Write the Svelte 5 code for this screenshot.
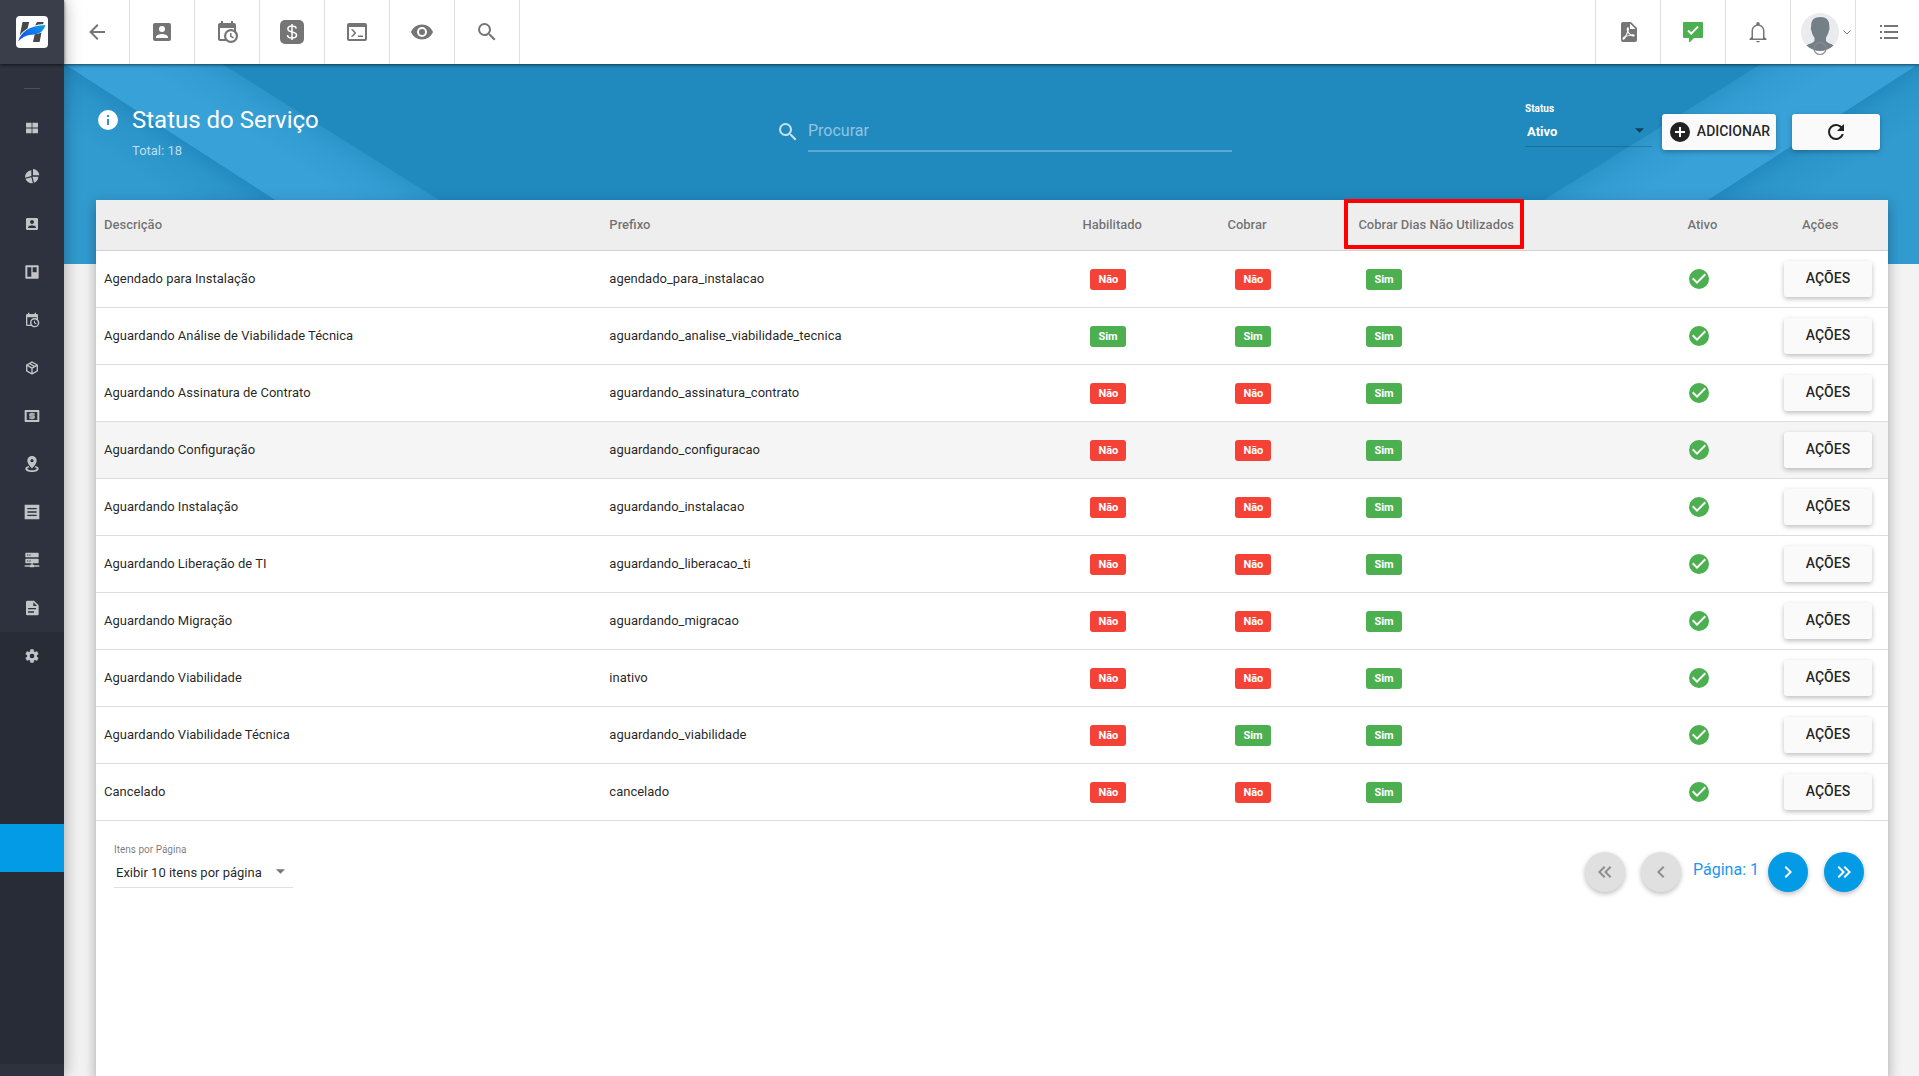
<script>
    let search = "";
    let status = "ativo";
    let perPage = "10";
    let page = 1;

    const icons = {
        back: "M20,11V13H8L13.5,18.5L12.08,19.92L4.16,12L12.08,4.08L13.5,5.5L8,11H20Z",
        account: "M6,17C6,15 10,13.9 12,13.9C14,13.9 18,15 18,17V18H6M15,9A3,3 0 0,1 12,12A3,3 0 0,1 9,9A3,3 0 0,1 12,6A3,3 0 0,1 15,9M3,5V19A2,2 0 0,0 5,21H19A2,2 0 0,0 21,19V5A2,2 0 0,0 19,3H5C3.89,3 3,3.9 3,5Z",
        calendar: "M15,13H16.5V15.82L18.94,17.23L18.19,18.53L15,16.69V13M19,8H5V19H9.67C9.24,18.09 9,17.07 9,16A7,7 0 0,1 16,9C17.07,9 18.09,9.24 19,9.67V8M5,21C3.89,21 3,20.1 3,19V5C3,3.89 3.89,3 5,3H6V1H8V3H16V1H18V3H19A2,2 0 0,1 21,5V11.1C22.24,12.36 23,14.09 23,16A7,7 0 0,1 16,23C14.09,23 12.36,22.24 11.1,21H5M16,11.15A4.85,4.85 0 0,0 11.15,16C11.15,18.68 13.32,20.85 16,20.85A4.85,4.85 0 0,0 20.85,16C20.85,13.32 18.68,11.15 16,11.15Z",
        console: "M20,19V7H4V19H20M20,3A2,2 0 0,1 22,5V19A2,2 0 0,1 20,21H4A2,2 0 0,1 2,19V5C2,3.89 2.9,3 4,3H20M13,17V15.5H18V17H13M9.3,13L5.8,9.3H7.9L10.9,12.4C11.2,12.8 11.2,13.2 10.9,13.6L7.9,16.7H5.8L9.3,13Z",
        eye: "M12,9A3,3 0 0,0 9,12A3,3 0 0,0 12,15A3,3 0 0,0 15,12A3,3 0 0,0 12,9M12,17A5,5 0 0,1 7,12A5,5 0 0,1 12,7A5,5 0 0,1 17,12A5,5 0 0,1 12,17M12,4.5C7,4.5 2.73,7.61 1,12C2.73,16.39 7,19.5 12,19.5C17,19.5 21.27,16.39 23,12C21.27,7.61 17,4.5 12,4.5Z",
        magnify: "M9.5,3A6.5,6.5 0 0,1 16,9.5C16,11.11 15.41,12.59 14.44,13.73L14.71,14H15.5L20.5,19L19,20.5L14,15.5V14.71L13.73,14.44C12.59,15.41 11.11,16 9.5,16A6.5,6.5 0 0,1 3,9.5A6.5,6.5 0 0,1 9.5,3M9.5,5C7,5 5,7 5,9.5C5,12 7,14 9.5,14C12,14 14,12 14,9.5C14,7 12,5 9.5,5Z",
        pdf: "M14,9H19.5L14,3.5V9M7,2H15L21,8V20A2,2 0 0,1 19,22H7C5.89,22 5,21.1 5,20V4A2,2 0 0,1 7,2M11.93,12.44C12.34,13.34 12.86,14.08 13.46,14.59L13.87,14.91C13,15.07 11.8,15.35 10.53,15.84L10.42,15.88L10.92,14.84C11.37,13.97 11.7,13.18 11.93,12.44M18.41,16.25C18.59,16.07 18.68,15.84 18.69,15.59C18.72,15.39 18.67,15.2 18.57,15.04C18.28,14.57 17.53,14.35 16.29,14.35L15,14.42L14.13,13.84C13.5,13.32 12.93,12.41 12.53,11.28L12.57,11.14C12.9,9.81 13.21,8.2 12.55,7.54C12.39,7.38 12.17,7.3 11.94,7.3H11.7C11.33,7.3 11,7.69 10.91,8.07C10.54,9.4 10.76,10.13 11.13,11.34V11.35C10.88,12.23 10.56,13.25 10.05,14.28L9.09,16.08L8.2,16.57C7,17.32 6.43,18.16 6.32,18.69C6.28,18.88 6.3,19.05 6.37,19.23L6.4,19.28L6.88,19.59L7.32,19.7C8.13,19.7 9.05,18.75 10.29,16.63L10.47,16.56C11.5,16.23 12.78,16 14.5,15.81C15.53,16.32 16.74,16.55 17.5,16.55C17.94,16.55 18.24,16.44 18.41,16.25Z",
        bell: "M10,21H14A2,2 0 0,1 12,22.4A2,2 0 0,1 10,21M20.5,19V20H3.5V19L5.5,17V11C5.5,7.9 7.4,5.2 10.3,4.4V3.6A1.7,1.7 0 0,1 12,2A1.7,1.7 0 0,1 13.7,3.6V4.4C16.6,5.2 18.5,7.9 18.5,11V17L20.5,19M17,11A5,5 0 0,0 12,5.7A5,5 0 0,0 7,11V18.5H17V11Z",
        list: "M4,5H6V7H4V5M8,5H22V7H8V5M4,11H6V13H4V11M8,11H22V13H8V11M4,17H6V19H4V17M8,17H22V19H8V17Z",
        info: "M13,9H11V7H13M13,17H11V11H13M12,2A10,10 0 0,0 2,12A10,10 0 0,0 12,22A10,10 0 0,0 22,12A10,10 0 0,0 12,2Z",
        plus: "M17,13H13V17H11V13H7V11H11V7H13V11H17M12,2A10,10 0 0,0 2,12A10,10 0 0,0 12,22A10,10 0 0,0 22,12A10,10 0 0,0 12,2Z",
        refresh: "M17.65,6.35C16.2,4.9 14.21,4 12,4A8,8 0 0,0 4,12A8,8 0 0,0 12,20C15.73,20 18.84,17.45 19.73,14H17.65C16.83,16.33 14.61,18 12,18A6,6 0 0,1 6,12A6,6 0 0,1 12,6C13.66,6 15.14,6.69 16.22,7.78L13,11H20V4L17.65,6.35Z",
        check: "M12,2A10,10 0 0,1 22,12A10,10 0 0,1 12,22A10,10 0 0,1 2,12A10,10 0 0,1 12,2M10,17L19,8L17.59,6.59L10,14.17L6.41,10.59L5,12L10,17Z",
        first: "M18.41,7.41L17,6L11,12L17,18L18.41,16.59L13.83,12L18.41,7.41M12.41,7.41L11,6L5,12L11,18L12.41,16.59L7.83,12L12.41,7.41Z",
        prev: "M15.41,16.58L10.83,12L15.41,7.41L14,6L8,12L14,18L15.41,16.58Z",
        next: "M8.59,16.58L13.17,12L8.59,7.41L10,6L16,12L10,18L8.59,16.58Z",
        last: "M5.59,7.41L7,6L13,12L7,18L5.59,16.59L10.17,12L5.59,7.41M11.59,7.41L13,6L19,12L13,18L11.59,16.59L16.17,12L11.59,7.41Z",
        grid: "M3,4H11.4V11.4H3V4M12.6,4H21V11.4H12.6V4M3,12.6H11.4V20H3V12.6M12.6,12.6H21V20H12.6V12.6Z",
        pie: "M13.5,1.5A10,10 0 0,1 23,11H13.5V1.5M11,3.5V12L1.5,14.5A10,10 0 0,1 11,3.5M2.3,16.2L11,13.8L13.3,22.8A10.5,10.5 0 0,1 2.3,16.2M12.7,13H21.5A10,10 0 0,1 15.1,22L12.7,13Z",
        board: "M3,2H21A1,1 0 0,1 22,3V21A1,1 0 0,1 21,22H3A1,1 0 0,1 2,21V3A1,1 0 0,1 3,2M5,5V19H11V5H5M13,5V12.5H19V5H13Z",
        box: "M21,16.5C21,16.88 20.79,17.21 20.47,17.38L12.57,21.82C12.41,21.94 12.21,22 12,22C11.79,22 11.59,21.94 11.43,21.82L3.53,17.38C3.21,17.21 3,16.88 3,16.5V7.5C3,7.12 3.21,6.79 3.53,6.62L11.43,2.18C11.59,2.06 11.79,2 12,2C12.21,2 12.41,2.06 12.57,2.18L20.47,6.62C20.79,6.79 21,7.12 21,7.5V16.5M12,4.15L10.11,5.22L16,8.61L17.96,7.5L12,4.15M6.04,7.5L12,10.85L13.96,9.75L8.08,6.35L6.04,7.5M5,15.91L11,19.29V12.58L5,9.21V15.91M19,15.91V9.21L13,12.58V19.29L19,15.91Z",
        cash: "M2,3H22A1,1 0 0,1 23,4V20A1,1 0 0,1 22,21H2A1,1 0 0,1 1,20V4A1,1 0 0,1 2,3M4,6V18H20V6H4M11,7H13V8H16V10H10V11H15A1,1 0 0,1 16,12V15A1,1 0 0,1 15,16H13V17H11V16H8V14H14V13H9A1,1 0 0,1 8,12V9A1,1 0 0,1 9,8H11V7Z",
        pin: "M12,0A7,7 0 0,1 19,7C19,12 12,18.5 12,18.5C12,18.5 5,12 5,7A7,7 0 0,1 12,0M12,4.6A2.4,2.4 0 0,0 9.6,7A2.4,2.4 0 0,0 12,9.4A2.4,2.4 0 0,0 14.4,7A2.4,2.4 0 0,0 12,4.6M22,19C22,22 17.5,24 12,24C6.500,24 2,22 2,19C2,17.2 4,15.7 7,15L8.2,17C6.4,17.4 5,18.2 5,19C5,20.2 8,21.3 12,21.3C16,21.3 19,20.2 19,19C19,18.2 17.6,17.4 15.8,17L17,15C20,15.7 22,17.2 22,19Z",
        note: "M1,1H23V23H1V1M5,6V8H19V6H5M5,11V13H19V11H5M5,16V18H19V16H5Z",
        server: "M3,1H21A1,1 0 0,1 22,2V7A1,1 0 0,1 21,8H3A1,1 0 0,1 2,7V2A1,1 0 0,1 3,1M3,10H21A1,1 0 0,1 22,11V16A1,1 0 0,1 21,17H13V19H15V20H23V22H15V23H9V22H1V20H9V19H11V17H3A1,1 0 0,1 2,16V11A1,1 0 0,1 3,10M4.5,3.7V5.3H6.5V3.7H4.5M8,3.7V5.3H10V3.7H8M4.5,12.7V14.3H6.5V12.7H4.5M8,12.7V14.3H10V12.7H8Z",
        file: "M14,9H19.5L14,3.5V9M5,1H15L22,8V21A2,2 0 0,1 20,23H5A2,2 0 0,1 3,21V3A2,2 0 0,1 5,1M6,12V14H18V12H6M6,17V19H15V17H6Z",
        cog: "M12,15.5A3.5,3.5 0 0,1 8.5,12A3.5,3.5 0 0,1 12,8.5A3.5,3.5 0 0,1 15.5,12A3.5,3.5 0 0,1 12,15.5M19.43,12.97C19.47,12.65 19.5,12.33 19.5,12C19.5,11.67 19.47,11.34 19.43,11L21.54,9.37C21.73,9.22 21.78,8.95 21.66,8.73L19.66,5.27C19.54,5.05 19.27,4.96 19.05,5.05L16.56,6.05C16.04,5.66 15.5,5.32 14.87,5.07L14.5,2.42C14.46,2.18 14.25,2 14,2H10C9.75,2 9.54,2.18 9.5,2.42L9.13,5.07C8.5,5.32 7.96,5.66 7.44,6.05L4.95,5.05C4.73,4.96 4.46,5.05 4.34,5.27L2.34,8.73C2.21,8.95 2.27,9.22 2.46,9.37L4.57,11C4.53,11.34 4.5,11.67 4.5,12C4.5,12.33 4.53,12.65 4.57,12.97L2.46,14.63C2.27,14.78 2.21,15.05 2.34,15.27L4.34,18.73C4.46,18.95 4.73,19.03 4.95,18.95L7.44,17.94C7.96,18.34 8.5,18.68 9.13,18.93L9.5,21.58C9.54,21.82 9.75,22 10,22H14C14.25,22 14.46,21.82 14.5,21.58L14.87,18.93C15.5,18.67 16.04,18.34 16.56,17.94L19.05,18.95C19.27,19.03 19.54,18.95 19.66,18.73L21.66,15.27C21.78,15.05 21.73,14.78 21.54,14.63L19.43,12.97Z",
    };

    const menu = [
        { icon: "grid", label: "Painel" },
        { icon: "pie", label: "Relatórios" },
        { icon: "account", label: "Clientes" },
        { icon: "board", label: "Quadros" },
        { icon: "calendar", label: "Agenda" },
        { icon: "box", label: "Estoque" },
        { icon: "cash", label: "Financeiro" },
        { icon: "pin", label: "Mapa" },
        { icon: "note", label: "Notas" },
        { icon: "server", label: "Rede" },
        { icon: "file", label: "Documentos" },
    ];

    // submenu of the settings group, collapsed to empty slots
    const submenu = ["Geral", "Usuários", "Empresas", "Serviços", "Planos", "Modelos", "Integrações", "Sistema"];

    const rows = [
        { desc: "Agendado para Instalação", prefix: "agendado_para_instalacao", enabled: false, charge: false },
        { desc: "Aguardando Análise de Viabilidade Técnica", prefix: "aguardando_analise_viabilidade_tecnica", enabled: true, charge: true },
        { desc: "Aguardando Assinatura de Contrato", prefix: "aguardando_assinatura_contrato", enabled: false, charge: false },
        { desc: "Aguardando Configuração", prefix: "aguardando_configuracao", enabled: false, charge: false, hover: true },
        { desc: "Aguardando Instalação", prefix: "aguardando_instalacao", enabled: false, charge: false },
        { desc: "Aguardando Liberação de TI", prefix: "aguardando_liberacao_ti", enabled: false, charge: false },
        { desc: "Aguardando Migração", prefix: "aguardando_migracao", enabled: false, charge: false },
        { desc: "Aguardando Viabilidade", prefix: "inativo", enabled: false, charge: false },
        { desc: "Aguardando Viabilidade Técnica", prefix: "aguardando_viabilidade", enabled: false, charge: true },
        { desc: "Cancelado", prefix: "cancelado", enabled: false, charge: false },
    ];

    const nextPage = () => {
        page = Math.min(page + 1, 2);
    }

    const prevPage = () => {
        page = Math.max(page - 1, 1);
    }
</script>

{#snippet icon(name)}
    <svg class="icon" viewBox="0 0 24 24" aria-hidden="true"><path fill-rule="evenodd" d={icons[name]} /></svg>
{/snippet}

{#snippet badge(yes)}
    <span class="badge" class:yes>{yes ? "Sim" : "Não"}</span>
{/snippet}

<div class="layout">
    <aside class="sidebar">
        <a class="logo" href="#inicio" aria-label="Início">
            <svg viewBox="0 0 32 32" aria-hidden="true">
                <defs>
                    <linearGradient id="swoosh" x1="0" x2="1" y1="1" y2="0">
                        <stop offset="0" stop-color="#0a46f0" />
                        <stop offset="1" stop-color="#13a0ea" />
                    </linearGradient>
                </defs>
                <rect width="32" height="32" rx="4" fill="#fff" />
                <path fill="#48474b" d="M6.5,6H13.2L11.4,13C8.5,14.6 5.8,16.7 3.8,19.5M21,6H27.6L23.6,26H17L18.6,18.5L16.8,14Z" />
                <path fill="#fff" d="M2,25C5,15 13,9 28,8L28.5,15C22,20 10,17 2,25Z" />
                <path fill="url(#swoosh)" d="M2.2,25.6C4.5,16.5 13,9.6 29.4,9C28,14.5 24,18 18,18.5C11.5,19 6.5,20.5 2.2,25.6Z" />
            </svg>
        </a>
        <nav class="menu">
            <span class="divider"></span>
            {#each menu as item}
                <a class="item" href="#{item.icon}" aria-label={item.label}>{@render icon(item.icon)}</a>
            {/each}
            <div class="group">
                <a class="item" href="#config" aria-label="Configurações">{@render icon("cog")}</a>
                {#each submenu as item, i}
                    <a class="item" class:active={i === 3} href="#config-{i}" aria-label={item}></a>
                {/each}
            </div>
        </nav>
    </aside>

    <div class="page">
        <header class="toolbar">
            <div class="tools">
                <button class="tool" aria-label="Voltar">{@render icon("back")}</button>
                <button class="tool" aria-label="Clientes">{@render icon("account")}</button>
                <button class="tool" aria-label="Agenda">{@render icon("calendar")}</button>
                <button class="tool" aria-label="Financeiro">
                    <svg class="icon" viewBox="0 0 24 24" aria-hidden="true">
                        <rect width="24" height="24" rx="5" />
                        <path class="line" d="M12,4V20M16.2,8.6C16,6.9 14.4,6 12,6C9.6,6 7.9,7.1 7.9,8.9C7.9,13 16.5,10.8 16.5,15C16.5,16.9 14.6,18 12,18C9.4,18 7.6,17 7.5,15" />
                    </svg>
                </button>
                <button class="tool" aria-label="Console">{@render icon("console")}</button>
                <button class="tool" aria-label="Visualizar">{@render icon("eye")}</button>
                <button class="tool" aria-label="Pesquisar">{@render icon("magnify")}</button>
            </div>
            <div class="tools end">
                <button class="tool" aria-label="PDF">{@render icon("pdf")}</button>
                <button class="tool green" aria-label="Mensagens">
                    <svg class="icon" viewBox="0 0 24 24" aria-hidden="true">
                        <path d="M3,2H21A1,1 0 0,1 22,3V17A1,1 0 0,1 21,18H13L9,22H8V18H3A1,1 0 0,1 2,17V3A1,1 0 0,1 3,2Z" />
                        <path class="line thick" d="M7,10.6L10.2,13.6L17,6.6" />
                    </svg>
                </button>
                <button class="tool" aria-label="Notificações">{@render icon("bell")}</button>
                <button class="tool user" aria-label="Usuário">
                    <svg class="avatar" viewBox="0 0 38 44" aria-hidden="true">
                        <circle cx="19" cy="19" r="19" fill="#e9ebee" />
                        <path fill="#757f88" d="M19.5,4C25,4 28.5,7 28.3,13C28.3,14.5 29,16 27.8,18C27.3,21 26,23 25,24.5V28C27,30.5 30,30.5 32.500,32.5C29,36 24,38 19,38C14,38 9,36 5.5,32.5C8,30.5 11.5,30.5 13.5,28V24.5C12,23 11,21 10.5,18C9.3,16 10,14.5 10.2,13C10,7 13,4 19.5,4Z" />
                        <circle cx="19" cy="35.5" r="6" fill="none" stroke="#8f8a86" stroke-width="1.2" />
                    </svg>
                    <svg class="caret" viewBox="0 0 8 5" aria-hidden="true"><path fill="none" stroke="#757575" d="M0.5,0.5L4,4L7.5,0.5" /></svg>
                </button>
                <button class="tool" aria-label="Menu">{@render icon("list")}</button>
            </div>
        </header>

        <div class="banner">
            {#each ["left", "right"] as side}
                <svg class="rays {side}" viewBox="0 0 480 200" aria-hidden="true">
                    <defs>
                        <linearGradient id="low-{side}" gradientUnits="userSpaceOnUse" x1="155" y1="100" x2="126" y2="145">
                            <stop offset="0" stop-color="#248bc1" />
                            <stop offset="0.3" stop-color="#2b94c9" />
                            <stop offset="1" stop-color="#319bd0" />
                        </linearGradient>
                        <linearGradient id="ray-{side}" gradientUnits="userSpaceOnUse" x1="318" y1="100" x2="292" y2="141">
                            <stop offset="0" stop-color="#2b95ca" />
                            <stop offset="0.4" stop-color="#339dd3" />
                            <stop offset="1" stop-color="#38a1d8" />
                        </linearGradient>
                    </defs>
                    <path fill="url(#ray-{side})" d="M0,0H158L477,200H310Z" />
                    <path fill="url(#low-{side})" d="M0,0L310,200H0Z" />
                </svg>
            {/each}
            <div class="heading">
                {@render icon("info")}
                <div>
                    <h1>Status do Serviço</h1>
                    <p>Total: {18}</p>
                </div>
            </div>
            <div class="search">
                {@render icon("magnify")}
                <input type="text" placeholder="Procurar" aria-label="Procurar" bind:value={search} />
            </div>
            <div class="actions">
                <div class="field light">
                    <label for="status">Status</label>
                    <div class="select">
                        <select id="status" bind:value={status}>
                            <option value="ativo">Ativo</option>
                            <option value="inativo">Inativo</option>
                        </select>
                        <svg viewBox="0 0 10 5" aria-hidden="true"><path d="M0,0H10L5,5Z" /></svg>
                    </div>
                </div>
                <button class="raised add">{@render icon("plus")}<span>Adicionar</span></button>
                <button class="raised" aria-label="Atualizar">{@render icon("refresh")}</button>
            </div>
        </div>

        <main class="card">
            <table>
                <colgroup>
                    <col class="c-desc" />
                    <col class="c-prefix" />
                    <col class="c-enabled" />
                    <col class="c-charge" />
                    <col class="c-unused" />
                    <col class="c-active" />
                    <col class="c-actions" />
                </colgroup>
                <thead>
                    <tr>
                        <th>Descrição</th>
                        <th>Prefixo</th>
                        <th>Habilitado</th>
                        <th>Cobrar</th>
                        <th class="marked">Cobrar Dias Não Utilizados</th>
                        <th>Ativo</th>
                        <th class="last">Ações</th>
                    </tr>
                </thead>
                <tbody>
                    {#each rows as row}
                        <tr class:hover={row.hover}>
                            <td class="text">{row.desc}</td>
                            <td class="text">{row.prefix}</td>
                            <td>{@render badge(row.enabled)}</td>
                            <td>{@render badge(row.charge)}</td>
                            <td>{@render badge(true)}</td>
                            <td class="ok">{@render icon("check")}</td>
                            <td><button class="raised"><span>Ações</span></button></td>
                        </tr>
                    {/each}
                </tbody>
            </table>

            <div class="footer">
                <div class="field">
                    <label for="per-page">Itens por Página</label>
                    <div class="select">
                        <select id="per-page" bind:value={perPage}>
                            <option value="10">Exibir 10 itens por página</option>
                            <option value="25">Exibir 25 itens por página</option>
                        </select>
                        <svg viewBox="0 0 10 5" aria-hidden="true"><path d="M0,0H10L5,5Z" /></svg>
                    </div>
                </div>
                <div class="pager">
                    <button class="round" disabled={page === 1} aria-label="Primeira" on:click={() => (page = 1)}>{@render icon("first")}</button>
                    <button class="round" disabled={page === 1} aria-label="Anterior" on:click={prevPage}>{@render icon("prev")}</button>
                    <span>Página: {page}</span>
                    <button class="round" aria-label="Próxima" on:click={nextPage}>{@render icon("next")}</button>
                    <button class="round" aria-label="Última" on:click={() => (page = 2)}>{@render icon("last")}</button>
                </div>
            </div>
        </main>
    </div>
</div>

<style>
    :global(body) {
        background: #f3f3f3;
        font-family: Roboto, "Liberation Sans", sans-serif;
        color: rgba(0, 0, 0, 0.87);
    }

    .layout {
        display: flex;
        min-height: 100vh;
    }

    button, input, select {
        font-family: inherit;
        border: none;
        outline: none;
        background: none;
        padding: 0;
    }

    button {
        cursor: pointer;
    }

    .icon {
        display: block;
        flex: none;
        width: 24px;
        height: 24px;
        fill: currentColor;
    }

    /* Left navigation */
    .sidebar {
        position: relative;
        z-index: 3;
        flex: none;
        width: 64px;
        background: #2e323e;
        box-shadow: 0 0 16px rgba(0, 0, 0, 0.35);
    }

    .logo {
        display: flex;
        align-items: center;
        justify-content: center;
        height: 64px;
        background: #3a3d4a;
        box-shadow: 0 1px 3px rgba(0, 0, 0, 0.6);
    }

    .logo svg {
        width: 32px;
        height: 32px;
    }

    .menu {
        display: flex;
        flex-direction: column;
    }

    .divider {
        align-self: center;
        width: 16px;
        height: 1px;
        margin: 24px 0 15px;
        background: #4d505a;
    }

    .item {
        display: flex;
        align-items: center;
        justify-content: center;
        height: 48px;
        color: #c3c4c8;
    }

    .item .icon {
        width: 16px;
        height: 16px;
    }

    .group {
        background: #282c37;
    }

    .active {
        background: #039be5;
    }

    .page {
        display: flex;
        flex: 1;
        flex-direction: column;
        min-width: 0;
    }

    /* Top toolbar */
    .toolbar {
        position: relative;
        z-index: 2;
        display: flex;
        justify-content: space-between;
        height: 64px;
        padding-left: 1px;
        background: #fff;
        box-shadow: 0 1px 3px rgba(0, 0, 0, 0.6);
    }

    .tools {
        display: flex;
    }

    .tool {
        display: flex;
        align-items: center;
        justify-content: center;
        width: 65px;
        border-right: 1px solid #e0e0e0;
        color: #757575;
    }

    .end .tool {
        border-right: none;
        border-left: 1px solid #e0e0e0;
    }

    .end .tool:last-child {
        width: 64px;
    }

    .end .green {
        color: #4caf50;
    }

    .line {
        fill: none;
        stroke: #fff;
        stroke-width: 1.5;
    }

    .thick {
        stroke-width: 2;
    }

    .end .user {
        justify-content: flex-end;
        gap: 4px;
        padding-right: 4px;
    }

    .avatar {
        width: 38px;
        height: 44px;
        margin-top: 6px;
    }

    .caret {
        width: 8px;
        height: 5px;
    }

    /* Blue banner behind the card */
    .banner {
        position: relative;
        display: grid;
        grid-template-columns: 85fr 57fr 81fr;
        align-items: center;
        box-sizing: border-box;
        height: 200px;
        padding: 0 39px 64px 32px;
        background: #208abf;
        color: #fff;
    }

    .rays {
        position: absolute;
        top: 0;
        left: 0;
        width: 480px;
        height: 200px;
    }

    .right {
        right: 0;
        left: auto;
        transform: scaleX(-1);
    }

    .heading, .search, .actions {
        position: relative;
        display: flex;
    }

    .heading {
        gap: 12px;
    }

    .heading .icon {
        margin-top: 4px;
    }

    h1 {
        margin: 0 0 6px;
        font-size: 24px;
        font-weight: 400;
        line-height: 32px;
    }

    p {
        margin: 0;
        font-size: 13px;
        line-height: 18px;
        color: rgba(255, 255, 255, 0.7);
    }

    .search {
        align-items: center;
        gap: 8px;
        color: rgba(255, 255, 255, 0.75);
    }

    .search input {
        flex: 1;
        box-sizing: border-box;
        min-width: 0;
        height: 40px;
        padding-bottom: 2px;
        border-bottom: 2px solid #5aa9d4;
        font-size: 16px;
        color: #fff;
    }

    .search input::placeholder {
        color: rgba(255, 255, 255, 0.5);
    }

    .actions {
        align-items: center;
        justify-content: flex-end;
        gap: 16px;
    }

    .field {
        width: 179px;
    }

    .field label {
        display: block;
        font-size: 10px;
        line-height: 12px;
        color: rgba(0, 0, 0, 0.54);
    }

    .select {
        position: relative;
        margin-top: 3px;
        border-bottom: 1px solid #e0e0e0;
    }

    .select select {
        display: block;
        box-sizing: border-box;
        width: 100%;
        height: 28px;
        padding: 0 2px 2px;
        appearance: none;
        font-size: 13px;
        color: rgba(0, 0, 0, 0.87);
    }

    .select svg {
        position: absolute;
        top: 10px;
        right: 8px;
        width: 9px;
        height: 5px;
        fill: rgba(0, 0, 0, 0.54);
        pointer-events: none;
    }

    .light {
        width: 127px;
        margin: 0 -6px 14px 0;
    }

    .light label {
        font-weight: 700;
        color: #fff;
    }

    .light .select {
        border-color: rgba(0, 0, 0, 0.18);
    }

    .light select {
        font-weight: 700;
        color: #fff;
    }

    .raised {
        display: inline-flex;
        align-items: center;
        justify-content: center;
        width: 88px;
        height: 36px;
        border-radius: 3px;
        background: #fafafa;
        box-shadow: 0 2px 5px rgba(0, 0, 0, 0.26);
        font-size: 14px;
        font-weight: 500;
        text-transform: uppercase;
        color: rgba(0, 0, 0, 0.87);
    }

    .raised span {
        padding-bottom: 2px;
    }

    .add {
        gap: 5px;
        width: 114px;
    }

    /* Table card */
    .card {
        position: relative;
        flex: 1;
        margin: -64px 31px 0 32px;
        background: #fff;
        box-shadow: 0 5px 5px -3px rgba(0, 0, 0, 0.2), 0 8px 10px 1px rgba(0, 0, 0, 0.14), 0 3px 14px 2px rgba(0, 0, 0, 0.12);
    }

    table {
        width: 100%;
        table-layout: fixed;
        border-spacing: 0;
        font-size: 13px;
    }

    .c-desc { width: 28.2%; }
    .c-prefix { width: 26.4%; }
    .c-enabled { width: 8.09%; }
    .c-charge { width: 7.31%; }
    .c-unused { width: 18.36%; }
    .c-active { width: 5.39%; }
    .c-actions { width: 6.25%; }

    th, td {
        box-sizing: border-box;
        padding: 0 8px;
        text-align: left;
        white-space: nowrap;
    }

    th {
        position: relative;
        height: 51px;
        padding-bottom: 2px;
        border-bottom: 1px solid #d0d0d0;
        background: #eee;
        font-weight: 500;
        color: rgba(0, 0, 0, 0.54);
    }

    .last {
        padding-left: 26px;
    }

    td {
        height: 57px;
        border-bottom: 1px solid #ddd;
    }

    .text {
        padding-bottom: 2px;
    }

    .hover td {
        background: #f5f5f5;
    }

    .marked::after {
        content: "";
        position: absolute;
        top: -1px;
        left: -6px;
        box-sizing: border-box;
        width: 180px;
        height: 50px;
        border: 4px solid #ff0000;
        border-radius: 1px;
    }

    .badge {
        display: inline-block;
        margin-left: 8px;
        padding: 0 8px;
        border-radius: 3px;
        background: #f44336;
        font-size: 11px;
        font-weight: 700;
        line-height: 21px;
        color: #fff;
    }

    .yes {
        background: #4caf50;
    }

    .ok {
        color: #4caf50;
    }

    /* Table footer */
    .footer {
        display: flex;
        align-items: flex-start;
        justify-content: space-between;
        padding: 23px 24px 24px 18px;
    }

    .pager {
        display: flex;
        align-items: center;
        gap: 16px;
        margin-top: 8px;
    }

    .pager span {
        margin: -6px -7px 0 -4px;
        font-size: 16px;
        color: #2196f3;
    }

    .round {
        display: flex;
        align-items: center;
        justify-content: center;
        width: 40px;
        height: 40px;
        border-radius: 50%;
        background: #039be5;
        box-shadow: 0 2px 5px rgba(0, 0, 0, 0.26);
        color: #fff;
    }

    .round:disabled {
        background: #e0e0e0;
        color: #8e8e8e;
        cursor: default;
    }
</style>
